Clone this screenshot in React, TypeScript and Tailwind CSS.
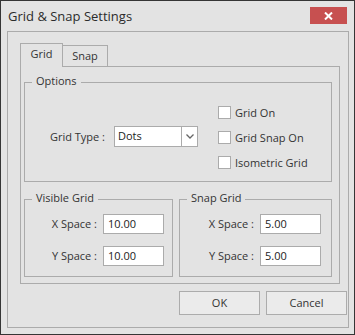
import React from "react";

const font = { fontFamily: '"Open Sans", "Noto Sans", sans-serif' };

function Group({ label, className, children }: { label: string; className: string; children?: React.ReactNode }) {
  return (
    <div className={`relative border border-[#ababab] ${className}`}>
      <span className="absolute left-[7px] top-[-10px] bg-[#e3e3e3] px-[4px] text-[11px] leading-[16px] text-[#333]">
        {label}
      </span>
      {children}
    </div>
  );
}

function Check({ label }: { label: string }) {
  return (
    <div className="flex h-[13px] items-center">
      <div className="h-[13px] w-[13px] border border-[#ababab] bg-white" />
      <span className="ml-[4px] text-[11px] leading-[16px] text-[#333]">{label}</span>
    </div>
  );
}

function Field({ label, value, labelW }: { label: string; value: string; labelW: string }) {
  return (
    <div className="flex items-center">
      <span className={`${labelW} pr-[6px] text-right text-[11px] leading-[16px] text-[#333]`}>{label}</span>
      <div className="flex h-[20px] w-[61px] items-center border border-[#ababab] bg-white pl-[4px] text-[11px] text-[#222]">
        {value}
      </div>
    </div>
  );
}

export default function App() {
  return (
    <div style={font} className="flex h-[335px] w-[355px] flex-col border border-[#353535] bg-[#e3e3e3]">
      {/* title bar */}
      <div className="flex h-[30px] shrink-0 items-start justify-between">
        <span className="ml-[7px] mt-[6px] text-[13px] leading-[18px] text-[#2b2b2b]">Grid &amp; Snap Settings</span>
        <div className="mr-[7px] mt-[6px] flex h-[17px] w-[37px] items-center justify-center bg-[#c75050]">
          <svg width="9" height="8" viewBox="0 0 9 8">
            <path d="M1 0.5 L8 7.5 M8 0.5 L1 7.5" stroke="white" strokeWidth="2" />
          </svg>
        </div>
      </div>

      {/* outer panel */}
      <div className="ml-[6px] flex h-[297px] w-[342px] flex-col border border-[#ababab] pl-[12px] pt-[11px]">
        {/* tabs */}
        <div className="flex h-[23px] items-end">
          <div className="relative z-10 -mb-px flex h-[24px] w-[43px] items-center justify-center border-x border-t border-[#ababab] bg-[#e3e3e3] pb-[2px] text-[11px] text-[#333]">
            Grid
          </div>
          <div className="-ml-px flex h-[21px] w-[46px] items-center justify-center border-x border-t border-[#ababab] text-[11px] text-[#333]">
            Snap
          </div>
        </div>
        {/* tab page */}
        <div className="flex h-[218px] w-[320px] flex-col border border-[#ababab] pl-[3px] pt-[15px]">
          <Group label="Options" className="flex h-[100px] w-[308px] items-start">
            <div className="mt-[43px] flex items-center">
              <span className="w-[89px] pr-[9px] text-right text-[11px] leading-[16px] text-[#333]">Grid Type :</span>
              <div className="flex h-[21px] w-[84px] items-stretch border border-[#ababab] bg-white">
                <span className="flex flex-1 items-center pl-[3px] text-[11px] text-[#222]">Dots</span>
                <div className="flex w-[16px] items-center justify-center border-l border-[#ababab] bg-white">
                  <svg width="8" height="5" viewBox="0 0 8 5">
                    <path d="M0.5 0.5 L4 4 L7.5 0.5" stroke="#666" strokeWidth="1.3" fill="none" />
                  </svg>
                </div>
              </div>
            </div>
            <div className="ml-[20px] mt-[23px] flex flex-col gap-[12px]">
              <Check label="Grid On" />
              <Check label="Grid Snap On" />
              <Check label="Isometric Grid" />
            </div>
          </Group>
          <div className="mt-[17px] flex gap-[6px]">
            <Group label="Visible Grid" className="flex h-[78px] w-[149px] flex-col gap-[12px] pt-[14px]">
              <Field label="X Space :" value="10.00" labelW="w-[78px]" />
              <Field label="Y Space :" value="10.00" labelW="w-[78px]" />
            </Group>
            <Group label="Snap Grid" className="flex h-[78px] w-[153px] flex-col gap-[12px] pt-[14px]">
              <Field label="X Space :" value="5.00" labelW="w-[80px]" />
              <Field label="Y Space :" value="5.00" labelW="w-[80px]" />
            </Group>
          </div>
        </div>
        {/* buttons */}
        <div className="mt-[7px] flex w-[327px] justify-end gap-[6px]">
          <button className="h-[24px] w-[81px] border border-[#acacac] bg-[#ebebeb] text-[11px] text-[#333]">OK</button>
          <button className="h-[24px] w-[81px] border border-[#acacac] bg-[#ebebeb] text-[11px] text-[#333]">Cancel</button>
        </div>
      </div>
    </div>
  );
}
